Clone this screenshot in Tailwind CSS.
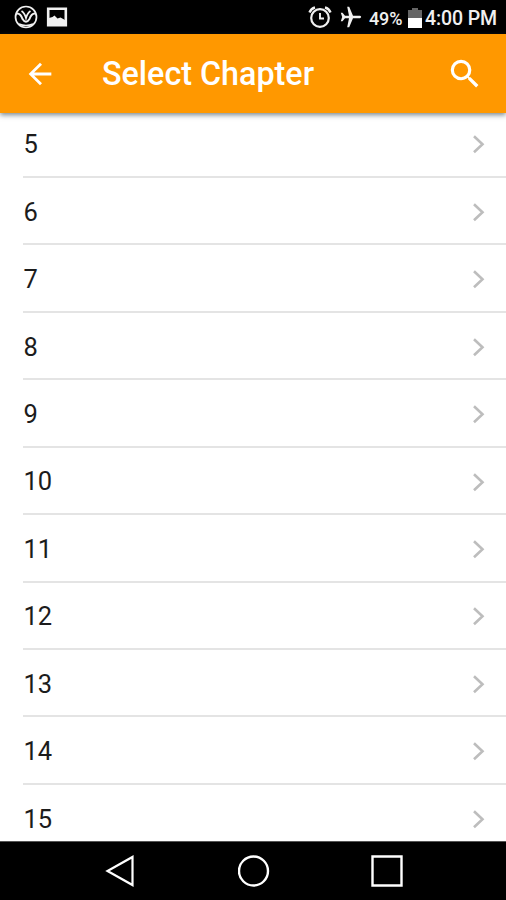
<!DOCTYPE html>
<html lang="en">
<head>
<meta charset="utf-8">
<title>Select Chapter</title>
<script src="https://cdn.jsdelivr.net/npm/@tailwindcss/browser@4"></script>
</head>
<body class="bg-white">
<div class="flex h-[900px] w-[506px] flex-col overflow-hidden font-[Roboto,sans-serif]">
  <div class="flex h-[34px] shrink-0 items-center bg-black pl-[14px] pr-[9px] text-[#f0f0f0]">
    <svg class="mr-[8px] size-6" viewBox="0 0 24 24" fill="none" stroke="currentColor"><circle cx="12" cy="12" r="10.500" stroke-width="1.700"/><path d="M2.500 8.500C6 8 7.500 11 8.500 14q3.500 5.500 7 0C16.500 11 18 8 21.500 8.500" stroke-width="2"/><path d="M7.500 6C10 7.500 11 9.500 12 13c1-3.500 2-5.500 4.500-7" stroke-width="1.800"/><path d="M5 19q7 3 14 0" stroke-width="1.400"/></svg>
    <svg class="h-[20px] w-[22px]" viewBox="0 0 22 20" fill="none" stroke="currentColor" stroke-width="2.600"><path d="M2.200 1.800h17.600v16.400H2.200z"/><path d="M3 17v-6l3.500-1 2-1.500 3 3 3-1 4.500 2.500V17z" fill="currentColor" stroke="none"/></svg>
    <div class="ml-auto flex items-center">
      <svg class="mr-[8px] size-6" viewBox="0 0 24 24" fill="none" stroke="currentColor"><circle cx="12" cy="13" r="8.800" stroke-width="2.200"/><path d="M12 8v5.500h4" stroke-width="1.900"/><path d="M1.500 7.500Q3 3.500 7 2.500M22.500 7.500Q21 3.500 17 2.500" stroke-width="2.400"/></svg>
      <svg class="mr-[7px] size-[22px]" viewBox="0 0 22 22" fill="currentColor"><path d="M20 9.800H13L9.200 .8H7.200L9 9.800H5L2.500 6.800H.8L2.200 11 .8 15.200H2.500L5 12.200H9L7.200 21.200H9.200L13 12.200H20q2.400-1.200 0-2.400z"/></svg>
      <span class="w-[39px] whitespace-nowrap pt-[3px] text-[18px] font-medium leading-[31px] tracking-[-0.100px]">49%</span>
      <svg class="mt-[2px] h-[21px] w-[14px]" viewBox="0 0 14 21"><path d="M4 0h6v2h4v9H0V2h4z" fill="#656565"/><path d="M0 10h14v10H0z" fill="#fff"/></svg>
      <span class="ml-[3px] whitespace-nowrap pt-[3px] text-[19.500px] font-medium leading-[31px] tracking-[-0.100px]">4:00 PM</span>
    </div>
  </div>
  <header class="relative z-10 flex h-[79px] shrink-0 items-center bg-[#ff9800] pl-[23px] pr-[22px] text-white shadow-[0_2px_5px_rgba(50,70,80,0.65)]">
    <svg class="size-[34px]" viewBox="0 0 24 24" fill="currentColor"><path d="M20 11H7.830l5.590-5.590L12 4l-8 8 8 8 1.410-1.410L7.830 13H20z"/></svg>
    <h1 class="ml-[45px] whitespace-nowrap text-[32.300px] font-medium leading-[40px]">Select Chapter</h1>
    <svg class="ml-auto size-[38px]" viewBox="0 0 24 24" fill="currentColor"><path d="M15.500 14h-.790l-.280-.270A6.470 6.470 0 0 0 16 9.500 6.500 6.500 0 1 0 9.500 16c1.610 0 3.090-.590 4.230-1.570l.270.280v.790l5 4.990L20.490 19zm-6 0a4.500 4.500 0 1 1 0-9 4.500 4.500 0 0 1 0 9z"/></svg>
  </header>
  <main class="min-h-0 flex-1 overflow-hidden bg-white">
    <ul id="chapters" class="-mt-[2.500px] pl-[23px]"></ul>
  </main>
  <nav class="flex h-[59px] shrink-0 items-center justify-between border-t border-[#555] bg-black pl-[104px] pr-[103px] text-white">
    <svg class="size-8" viewBox="0 0 32 32" fill="none" stroke="currentColor" stroke-width="2.200"><path d="M28.500 2v28L3.500 16z"/></svg>
    <svg class="size-8" viewBox="0 0 32 32" fill="none" stroke="currentColor" stroke-width="2.400"><circle cx="15.500" cy="16" r="14.500"/></svg>
    <svg class="size-8" viewBox="0 0 32 32" fill="none" stroke="currentColor" stroke-width="2.400"><path d="M1.500 1.500h29v29h-29z"/></svg>
  </nav>
</div>
<script>
  const list = document.getElementById('chapters');
  for (let n = 5; n <= 15; n++) {
    list.insertAdjacentHTML('beforeend', `<li class="flex h-[67.450px] items-center justify-between border-b-2 border-[#e4e4e4] pt-[2.200px] pr-[20px] text-[25.500px] text-[#1c1c1c]"><span class="pl-[0.500px]">${n}</span><svg class="h-[20px] w-[15px]" viewBox="0 0 15 20" fill="none" stroke="#bdbdbd" stroke-width="2.600"><path d="M3 2.300l8.500 8L3 18.300"/></svg></li>`);
  }
</script>
</body>
</html>
